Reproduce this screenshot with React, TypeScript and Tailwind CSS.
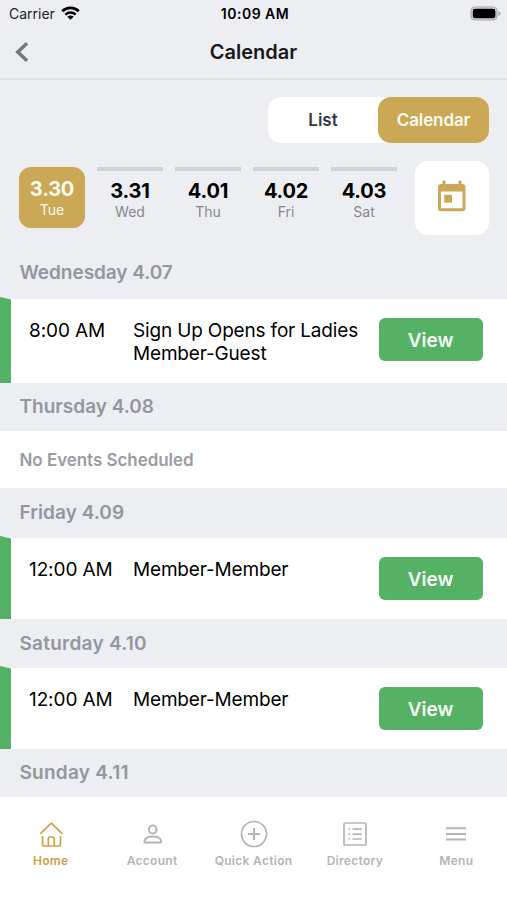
import React from "react";

type TabName = "Home" | "Account" | "Quick Action" | "Directory" | "Menu";

interface CalendarEvent {
  time:  string;
  title: string;
}

interface DaySection {
  label:        string;
  headerClass:  string;
  bodyHeight?:  string;
  event?:       CalendarEvent;
}

const DAYS = [
  { date: "3.30", day: "Tue" },
  { date: "3.31", day: "Wed" },
  { date: "4.01", day: "Thu" },
  { date: "4.02", day: "Fri" },
  { date: "4.03", day: "Sat" },
];

const SECTIONS: DaySection[] = [
  {
    label: "Wednesday 4.07",
    headerClass: "h-[52px] tracking-[-0.05px]",
    bodyHeight: "h-[84px]",
    event: { time: "8:00 AM", title: "Sign Up Opens for Ladies Member-Guest" },
  },
  { label: "Thursday 4.08", headerClass: "h-12", bodyHeight: "h-[57px]" },
  {
    label: "Friday 4.09",
    headerClass: "h-[50px] tracking-[0.05px]",
    bodyHeight: "h-[81px]",
    event: { time: "12:00 AM", title: "Member-Member" },
  },
  {
    label: "Saturday 4.10",
    headerClass: "h-[49px] tracking-[0.25px]",
    bodyHeight: "h-[81px]",
    event: { time: "12:00 AM", title: "Member-Member" },
  },
  { label: "Sunday 4.11", headerClass: "h-12 tracking-[0.25px]" },
];

const TABS: TabName[] = ["Home", "Account", "Quick Action", "Directory", "Menu"];

export default function App() {
  return (
    <div
      className="flex h-[900px] w-[507px] flex-col overflow-hidden bg-[#edeef2] text-black"
      style={{ fontFamily: 'Inter, "Liberation Sans", sans-serif' }}
    >
      <StatusBar />

      {/* Title bar */}
      <header className="grid h-[52px] shrink-0 grid-cols-3 items-center border-b-2 border-[#e0e1e4] px-[15px] pb-[2px]">
        <svg className="h-[22px] w-[14px]" viewBox="0 0 14 22" fill="none">
          <path d="M12 2.2 2.8 11l9.2 8.8" stroke="#77787b" strokeWidth="3.6" />
        </svg>
        <h1 className="text-center text-[20px] font-semibold text-[#17181c]">Calendar</h1>
      </header>

      {/* List / calendar switch */}
      <div className="mt-[17px] mr-[18px] flex h-[46px] w-[221px] shrink-0 self-end rounded-[13px] bg-white">
        <button type="button" className="flex-1 pt-[2px] text-[17px] font-semibold text-[#34373f]">
          List
        </button>
        <button
          type="button"
          className="w-[111px] rounded-[13px] bg-[#caa856] pt-[2px] text-[17px] font-semibold tracking-[-0.1px] text-[#fffaf0]"
        >
          Calendar
        </button>
      </div>

      {/* Day strip */}
      <div className="mt-[18px] mb-[12px] flex shrink-0 justify-between pr-[18px] pl-[19px]">
        <div className="flex gap-3 pt-[6px]">
          {DAYS.map((d, i) => (
            <DayTile key={d.date} date={d.date} day={d.day} selected={i === 0} />
          ))}
        </div>
        <div className="flex size-[74px] items-center justify-center rounded-[13px] bg-white pb-[4px]">
          <svg className="h-[32px] w-[30px]" viewBox="0 0 30 32">
            <path
              d="M5.500 .5h3V4h13V.5h3V4h.8a3.200 3.200 0 0 1 3.200 3.200v20.800a3.200 3.200 0 0 1-3.200 3.200H4.200A3.200 3.200 0 0 1 1 28V7.200A3.200 3.200 0 0 1 4.200 4H5.500ZM4 11.400v16.800h21.500V11.400Z"
              fill="#caa856"
              fillRule="evenodd"
            />
            <path d="M7.200 14.800h7.800v7.800H7.200z" fill="#caa856" />
          </svg>
        </div>
      </div>

      <main className="min-h-0 flex-1">
        {SECTIONS.map((section) => (
          <EventSection key={section.label} section={section} />
        ))}
      </main>

      <nav className="flex h-[103px] shrink-0 bg-white">
        {TABS.map((name) => (
          <div
            key={name}
            className={[
              "flex flex-1 flex-col items-center pt-[22px]",
              name === "Home" ? "text-[#caa24a]" : "text-[#b2b5b9]",
            ].join(" ")}
          >
            <TabIcon name={name} />
            <span className="mt-[4px] text-[12px] leading-4 font-semibold tracking-[0.3px] whitespace-nowrap">
              {name}
            </span>
          </div>
        ))}
      </nav>
    </div>
  );
}

// ── Sub-components ──────────────────────────────────────────────────────────

function StatusBar() {
  return (
    <div className="grid h-7 shrink-0 grid-cols-3 items-center pr-[6px] pb-[2px] pl-[9px]">
      <div className="flex items-center gap-[6px]">
        <span className="text-[14px] text-[#222327]">Carrier</span>
        <svg className="h-[14px] w-[19px]" viewBox="0 0 19 14" fill="none" stroke="#000">
          <path d="M1.200 5.300a12 12 0 0 1 16.600 0" strokeWidth="2.700" />
          <path d="M4.300 8.600a7.600 7.600 0 0 1 10.400 0" strokeWidth="2.400" />
          <path d="M9.500 13.700 6.300 10.700a4.600 4.600 0 0 1 6.400 0Z" fill="#000" stroke="none" />
        </svg>
      </div>
      <span className="text-center text-[14px] font-semibold tracking-[0.5px] whitespace-nowrap">10:09 AM</span>
      <svg className="h-[15px] w-[31px] justify-self-end" viewBox="0 0 31 15">
        <rect x="1" y="1" width="26" height="13" rx="4" fill="#d5d6d9" stroke="#a7a8ab" strokeWidth="1.200" />
        <rect x="2.800" y="2.800" width="22.600" height="9.400" rx="2.200" fill="#000" />
        <path d="M28.500 5v5c1.400-.5 2-1.400 2-2.500s-.6-2-2-2.500Z" fill="#a7a8ab" />
      </svg>
    </div>
  );
}

function DayTile({
  date,
  day,
  selected = false,
}: {
  date:      string;
  day:       string;
  selected?: boolean;
}) {
  return (
    <div
      className={[
        "flex h-[61px] w-[66px] flex-col items-center",
        selected
          ? "rounded-[12px] bg-[#caa856] pt-[11px] text-[#fffaf0]"
          : "border-t-4 border-[#d1d2d6] pt-[9px]",
      ].join(" ")}
    >
      <span className="text-[20px] leading-[22px] font-bold tracking-[-0.2px]">{date}</span>
      <span
        className={[
          "text-[14px] leading-5",
          selected ? "" : "text-[#85878c]",
        ].join(" ")}
      >
        {day}
      </span>
    </div>
  );
}

function EventSection({ section }: { section: DaySection }) {
  const { label, headerClass, bodyHeight, event } = section;

  return (
    <section>
      <h2
        className={`flex items-center pt-px pl-[19.5px] text-[19px] font-semibold text-[#93969e] ${headerClass}`}
      >
        {label}
      </h2>

      {event && (
        <div className={`flex bg-white ${bodyHeight}`}>
          <svg className="-mt-[2px] h-[calc(100%+2px)] w-[11px] shrink-0" viewBox="0 0 11 86" preserveAspectRatio="none">
            <path d="M0 0 11 2.500V86H0Z" fill="#55b165" />
          </svg>
          <p className="w-[104px] shrink-0 pt-[20px] pl-[18px] text-[19px] leading-[23px] tracking-[-0.1px] whitespace-nowrap">
            {event.time}
          </p>
          <p className="ml-[18px] w-[235px] shrink-0 pt-[20px] text-[19px] leading-[23px] tracking-[-0.17px]">
            {event.title}
          </p>
          <button
            type="button"
            className="mt-[19px] ml-[10.5px] h-[43px] w-[104px] shrink-0 rounded-[6px] bg-[#55b165] pt-[3px] text-[19px] font-semibold text-[#f7fff5]"
          >
            View
          </button>
        </div>
      )}

      {!event && bodyHeight && (
        <p className={`flex items-center bg-white pt-[2px] pl-[19.5px] text-[17px] font-semibold tracking-[-0.05px] text-[#999ca2] ${bodyHeight}`}>
          No Events Scheduled
        </p>
      )}
    </section>
  );
}

function TabIcon({ name }: { name: TabName }) {
  return (
    <svg className="size-[30px]" viewBox="0 0 30 30" fill="none" stroke="currentColor" strokeWidth="1.700">
      {name === "Home" && (
        <>
          <path d="M4.200 14.800 15.300 4.100 26.400 14.800" />
          <path d="M6.500 17v8q0 2 2 2h14q2 0 2-2v-8" />
          <path d="M12.300 27v-6.900q0-2.100 2.100-2.100h1.800q2.100 0 2.100 2.100V27" />
        </>
      )}
      {name === "Account" && (
        <>
          <circle cx="15.700" cy="10.500" r="3.900" strokeWidth="2" />
          <path d="M7.500 23.500v-1.900c0-2.500 4.200-4 8.200-4s8.200 1.500 8.200 4v1.900Z" strokeWidth="2" />
        </>
      )}
      {name === "Quick Action" && (
        <>
          <circle cx="15" cy="15" r="12.500" />
          <path d="M15 9v12M9 15h12" strokeWidth="2" />
        </>
      )}
      {name === "Directory" && (
        <>
          <rect x="4" y="4" width="22" height="22" rx="1" />
          <path d="M12.500 10.200h9.300M12.500 15.100h9.300M12.500 20h9.300M8.500 10.200h1.800M8.500 15.100h1.800M8.500 20h1.800" />
        </>
      )}
      {name === "Menu" && <path d="M5 9.200h20M5 15h20M5 20.600h20" strokeWidth="2" />}
    </svg>
  );
}
